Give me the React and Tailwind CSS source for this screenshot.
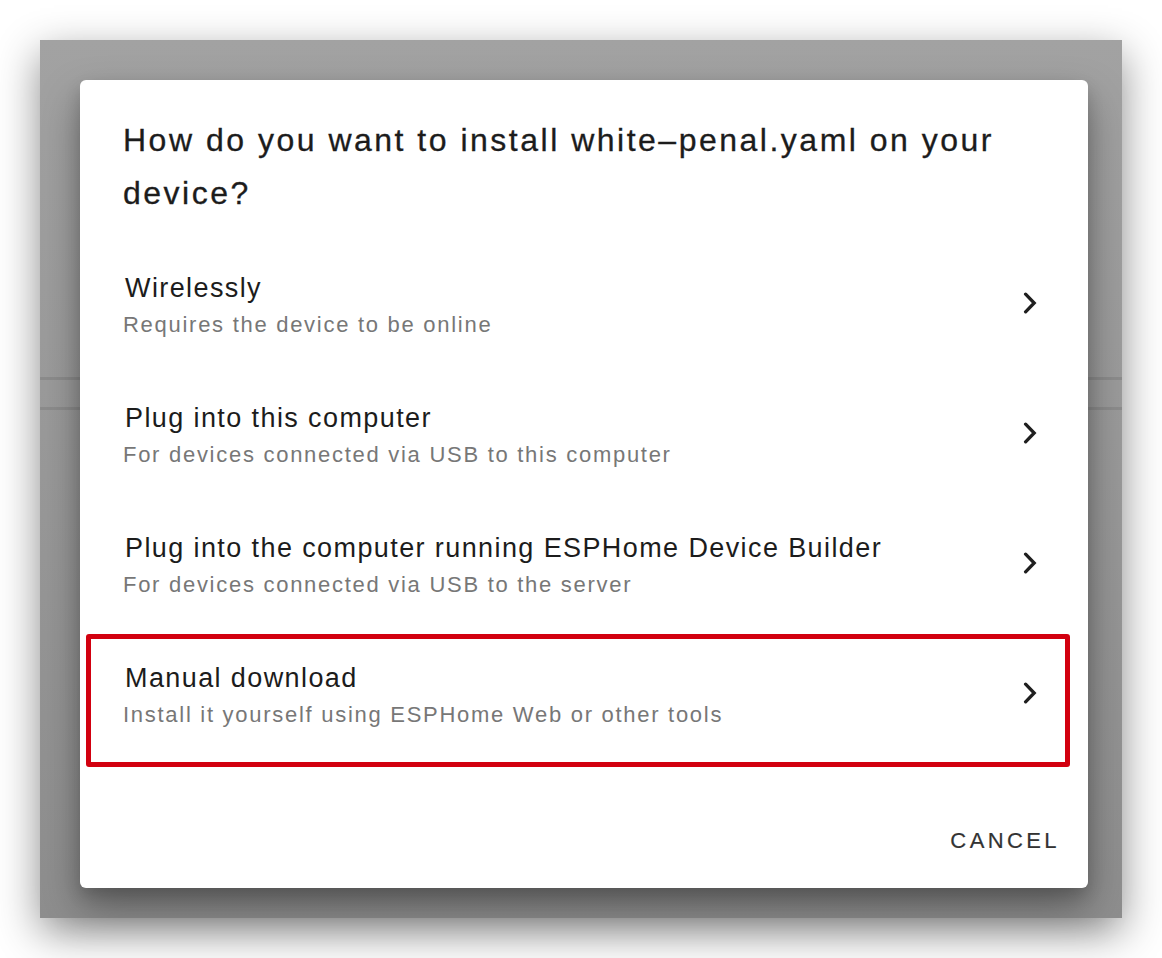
import React from "react";

const rows = [
  { title: "Wirelessly", sub: "Requires the device to be online" },
  { title: "Plug into this computer", sub: "For devices connected via USB to this computer" },
  { title: "Plug into the computer running ESPHome Device Builder", sub: "For devices connected via USB to the server" },
  { title: "Manual download", sub: "Install it yourself using ESPHome Web or other tools", highlight: true },
];

function Chevron() {
  return (
    <svg width="14" height="22" viewBox="0 0 14 22" className="shrink-0">
      <path d="M2.6 2.2 L11.2 11 L2.6 19.8" fill="none" stroke="#1f1f1f" strokeWidth="3.3" strokeLinecap="round" strokeLinejoin="miter" />
    </svg>
  );
}

export default function App() {
  return (
    <div
      className="w-[1162px] h-[958px] bg-white p-[40px]"
      style={{ fontFamily: '"Liberation Sans", Arial, sans-serif' }}
    >
      <div className="relative h-[878px] bg-[linear-gradient(180deg,#a2a2a2_0%,#9a9a9a_45%,#8e8e8e_100%)] shadow-[0_14px_40px_rgba(0,0,0,0.45)]">
        <div className="pt-[337px]">
          <div className="h-[3px] bg-[#8c8c8c]" />
          <div className="h-[27px]" />
          <div className="h-[3px] bg-[#8c8c8c]" />
        </div>

        <div className="absolute left-[40px] top-[40px] w-[1008px] h-[808px] bg-white rounded-[6px] shadow-[0_20px_40px_rgba(0,0,0,0.35),0_8px_16px_rgba(0,0,0,0.15)] flex flex-col">
          <h2 className="pt-[34px] pl-[43px] pr-[60px] text-[32px] leading-[53px] tracking-[2.5px] text-[#1c1c1c] [-webkit-text-stroke:0.3px_#1c1c1c]">
            How do you want to install white–penal.yaml on your device?
          </h2>

          <div className="mt-[18px] flex flex-col">
            {rows.map((r) => (
              <div key={r.title} className="relative h-[130px] flex items-center pl-[43px] pr-[51px]">
                <div className="flex-1 flex flex-col pt-[5px]">
                  <div className="pl-[2px] text-[27px] leading-[36px] tracking-[1.4px] text-[#1c1c1c]">{r.title}</div>
                  <div className="mt-[3px] text-[22px] leading-[32px] tracking-[1.72px] text-[#777777]">{r.sub}</div>
                </div>
                <Chevron />
                {r.highlight && (
                  <div className="absolute left-[6px] top-[6px] right-[18px] bottom-[-9px] border-[5px] border-[#d2000f] rounded-[3px] pointer-events-none" />
                )}
              </div>
            ))}
          </div>

          <div className="mt-[67px] flex justify-end pr-[28px]">
            <span className="text-[22px] leading-[32px] tracking-[3.4px] text-[#333333] [-webkit-text-stroke:0.2px_#333333]">CANCEL</span>
          </div>
        </div>
      </div>
    </div>
  );
}
